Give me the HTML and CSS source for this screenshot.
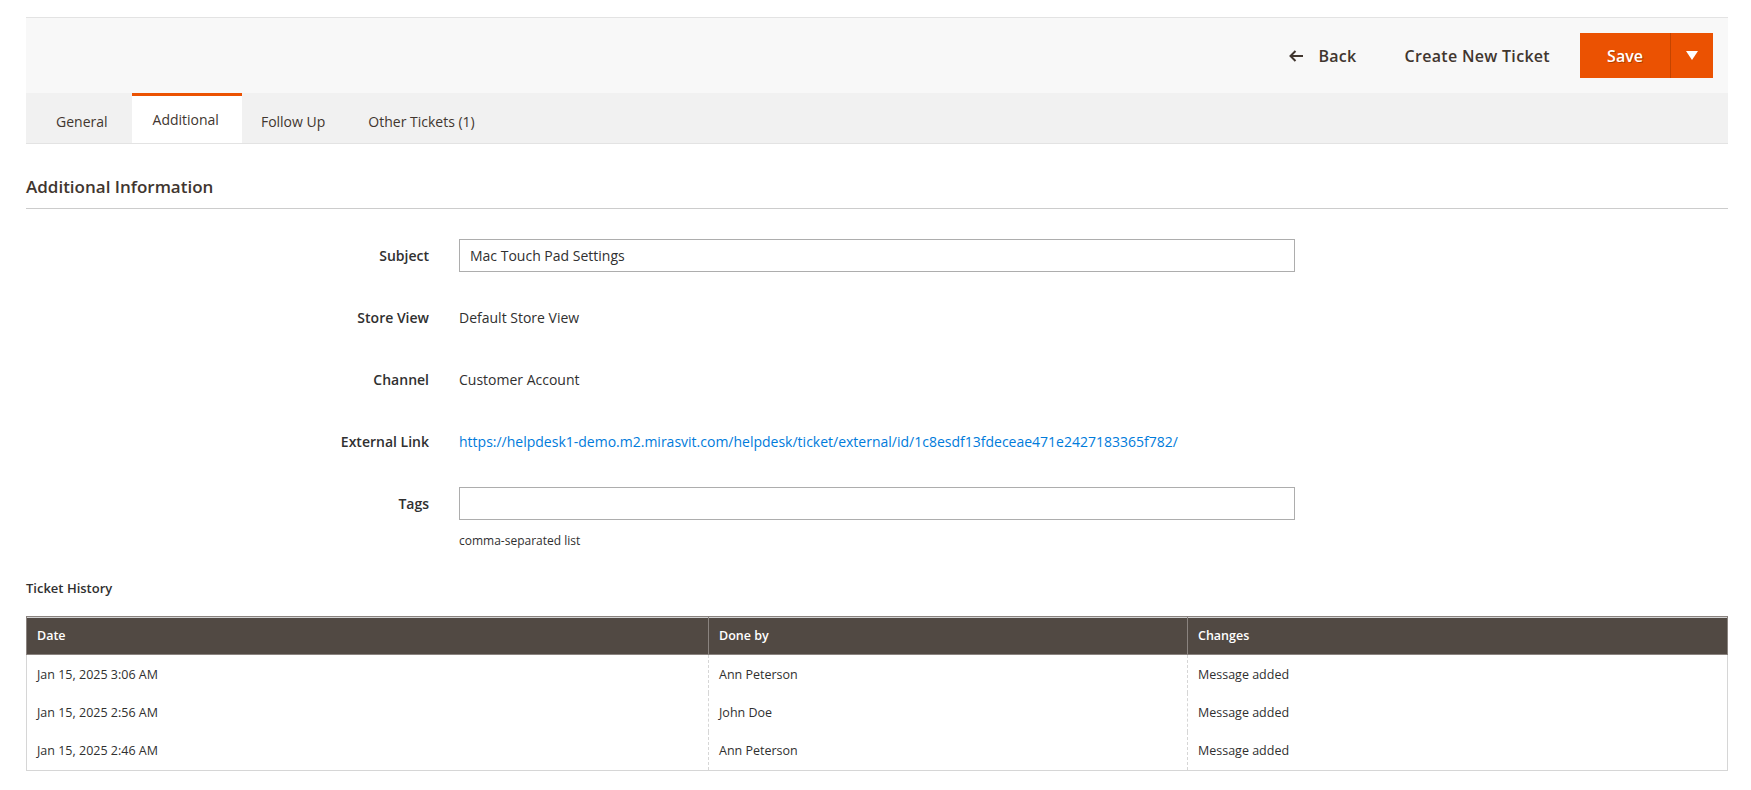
FILE: index.html
```html
<!DOCTYPE html>
<html>
<head>
<meta charset="utf-8">
<link rel="stylesheet" href="styles.css">
</head>
<body>
<div class="page">
  <div class="page-actions">
    <button class="act act-back">
      <svg class="back-ico" width="14" height="12" viewBox="0 0 14 12"><path d="M6.5 1 L1.5 6 L6.5 11 M1.5 6 H14" fill="none" stroke="#41362f" stroke-width="2"/></svg>
      <span>Back</span>
    </button>
    <button class="act act-new">Create New Ticket</button>
    <div class="split">
      <button class="split-main">Save</button>
      <button class="split-toggle"><svg width="12" height="9" viewBox="0 0 12 9"><path d="M0 0 H12 L6 9 Z" fill="#fff"/></svg></button>
    </div>
  </div>

  <div class="tabs">
    <div class="tab first">General</div>
    <div class="tab active">Additional</div>
    <div class="tab">Follow Up</div>
    <div class="tab">Other Tickets (1)</div>
  </div>

  <h2 class="section-title">Additional Information</h2>

  <div class="form">
    <div class="row">
      <label class="lbl">Subject</label>
      <div class="ctl"><div class="input">Mac Touch Pad Settings</div></div>
    </div>
    <div class="row">
      <label class="lbl">Store View</label>
      <div class="ctl">Default Store View</div>
    </div>
    <div class="row">
      <label class="lbl">Channel</label>
      <div class="ctl">Customer Account</div>
    </div>
    <div class="row">
      <label class="lbl">External Link</label>
      <div class="ctl"><a class="link" href="#">https://helpdesk1-demo.m2.mirasvit.com/helpdesk/ticket/external/id/1c8esdf13fdeceae471e2427183365f782/</a></div>
    </div>
    <div class="row">
      <label class="lbl">Tags</label>
      <div class="ctl"><div class="input"></div></div>
    </div>
    <div class="row note-row">
      <div></div>
      <div class="note">comma-separated list</div>
    </div>
  </div>

  <h3 class="history-title">Ticket History</h3>

  <table class="grid">
    <thead>
      <tr><th class="c1">Date</th><th class="c2">Done by</th><th class="c3">Changes</th></tr>
    </thead>
    <tbody>
      <tr><td>Jan 15, 2025 3:06 AM</td><td>Ann Peterson</td><td>Message added</td></tr>
      <tr><td>Jan 15, 2025 2:56 AM</td><td>John Doe</td><td>Message added</td></tr>
      <tr><td>Jan 15, 2025 2:46 AM</td><td>Ann Peterson</td><td>Message added</td></tr>
    </tbody>
  </table>
</div>
</body>
</html>
```

FILE: styles.css
```css
* { box-sizing: border-box; }
body {
  margin: 0;
  background: #fff;
  font-family: "Open Sans", "Liberation Sans", sans-serif;
  color: #303030;
  font-size: 14px;
}
.page {
  padding: 17px 23px 0 26px;
}
.page-actions {
  border-top: 1px solid #e3e3e3;
  background: #f8f8f8;
  height: 76px;
  display: flex;
  justify-content: flex-end;
  align-items: center;
  padding: 0 15px;
}
.act {
  background: none;
  border: 0;
  font-family: "Open Sans", "Liberation Sans", sans-serif;
  font-size: 16px;
  font-weight: 600;
  letter-spacing: 0.3px;
  color: #41362f;
  padding: 0;
  display: flex;
  align-items: center;
  cursor: pointer;
}
.act-back { margin-right: 48px; }
.back-ico { margin-right: 15px; }
.act-new { margin-right: 30px; }
.split {
  display: flex;
  height: 45px;
  background: #eb5202;
}
.split-main, .split-toggle {
  background: #eb5202;
  border: 0;
  color: #fff;
  font-family: "Open Sans", "Liberation Sans", sans-serif;
  font-size: 16px;
  font-weight: 600;
  text-shadow: 1px 1px 0 rgba(0,0,0,0.25);
  cursor: pointer;
}
.split-main {
  width: 91px;
  border-right: 1px solid #c44400;
}
.split-toggle {
  width: 42px;
  display: flex;
  align-items: center;
  justify-content: center;
  padding: 0;
}
.tabs {
  display: flex;
  background: #f1f1f1;
  border-bottom: 1px solid #e3e3e3;
  height: 51px;
}
.tab {
  padding: 3px 24px 0 19px;
  display: flex;
  align-items: center;
  font-size: 14px;
  color: #41362f;
  border-top: 3px solid transparent;
}
.tab.first { padding-left: 30px; padding-right: 24px; }
.tab.active {
  background: #fff;
  border-top-color: #eb5202;
  padding-top: 0;
  padding-left: 21px;
  padding-right: 23px;
}
.section-title {
  margin: 31px 0 0;
  font-size: 17px;
  font-weight: 600;
  color: #41362f;
  line-height: 24px;
  padding-bottom: 9px;
  border-bottom: 1px solid #cccccc;
}
.form {
  margin-top: 30px;
  display: flex;
  flex-direction: column;
  gap: 29px;
}
.row {
  display: grid;
  grid-template-columns: 403px 836px;
  column-gap: 30px;
  align-items: center;
  min-height: 33px;
}
.lbl {
  text-align: right;
  font-weight: 600;
  font-size: 14px;
  color: #303030;
}
.ctl {
  font-size: 14px;
  color: #303030;
}
.input {
  height: 33px;
  border: 1px solid #adadad;
  padding: 0 10px;
  line-height: 31px;
  font-size: 14px;
  color: #303030;
  background: #fff;
}
.link {
  color: #007bdb;
  text-decoration: none;
}
.note-row {
  margin-top: -17px;
  min-height: 0;
}
.note {
  font-size: 12px;
  color: #303030;
  line-height: 17px;
}
.history-title {
  margin: 30px 0 0;
  font-size: 13px;
  font-weight: 600;
  color: #303030;
  line-height: 18px;
}
.grid {
  margin-top: 19px;
  width: 100%;
  border-collapse: collapse;
  table-layout: fixed;
  font-size: 12.5px;
}
.grid th {
  background: #514943;
  color: #fff;
  font-weight: 600;
  text-align: left;
  padding: 0 10px;
  height: 38px;
  border: 1px solid #8a837f;
  box-shadow: inset 0 1px 0 #d1d1d1;
}
.grid th + th { border-left: 1px solid #d1d1d1; }
.grid .c1 { width: 682px; }
.grid .c2 { width: 479px; }
.grid td {
  padding: 0 10px;
  height: 38.5px;
  color: #303030;
  border-left: 1px dashed #d6d6d6;
}
.grid td:first-child { border-left: 1px solid #d6d6d6; }
.grid td:last-child { border-right: 1px solid #d6d6d6; }
.grid tbody tr:last-child td { border-bottom: 1px solid #d6d6d6; }
```
